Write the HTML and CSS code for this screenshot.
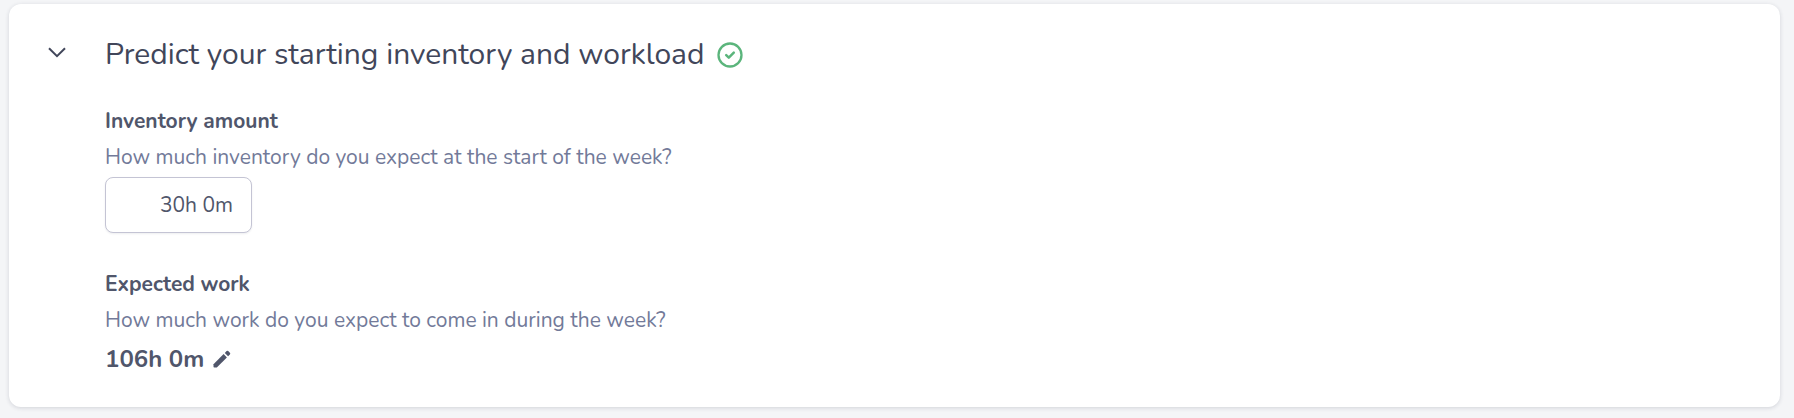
FILE: index.html
```html
<!DOCTYPE html>
<html lang="en">
<head>
  <meta charset="UTF-8">
  <meta name="viewport" content="width=device-width, initial-scale=1.0">
  <title>Weekly plan</title>
  <link rel="stylesheet" href="styles.css">
</head>
<body>
  <section class="card">
    <button type="button" class="toggle" aria-label="Collapse section" aria-expanded="true">
      <svg width="18" height="11" viewBox="0 0 18 11" fill="none" stroke="currentColor" stroke-width="2">
        <path d="M1 1.2L9 9.2L17 1.2"/>
      </svg>
    </button>
    <form class="content">
      <div class="heading">
        <h2>Predict your starting inventory and workload</h2>
        <svg class="check" width="26" height="26" viewBox="0 0 26 26" fill="none" stroke="currentColor">
          <circle cx="13" cy="13" r="11.5" stroke-width="2.3"/>
          <path d="M9.2 13.2L11.8 15.7L16.8 10.7" stroke-width="2.5" stroke-linecap="round" stroke-linejoin="round"/>
        </svg>
      </div>
      <div class="form-group">
        <label for="inventory">Inventory amount</label>
        <p>How much inventory do you expect at the start of the week?</p>
        <input type="text" id="inventory" name="inventory" value="30h 0m">
      </div>
      <div class="form-group">
        <h3>Expected work</h3>
        <p>How much work do you expect to come in during the week?</p>
        <div class="amount">
          <span>106h 0m</span>
          <button type="button" class="edit" aria-label="Edit expected work">
            <svg width="18" height="18" viewBox="0 0 18 18" fill="currentColor">
              <path d="M0.5 14.2L10.6 4.1L13.9 7.4L3.8 17.5H1.3Q0.5 17.5 0.5 16.7Z"/>
              <path d="M11.8 2.9L13.6 1.1Q14.4 0.3 15.2 1.1L16.9 2.8Q17.7 3.6 16.9 4.4L15.1 6.2Z"/>
            </svg>
          </button>
        </div>
      </div>
    </form>
  </section>
</body>
</html>
```

FILE: styles.css
```css
body {
  margin: 0;
  padding: 4px 14px 8px 9px;
  font-family: Nunito, Lato, sans-serif;
  font-size: 21px;
  line-height: 36px;
  color: #50566b;
  background-color: #f4f5f7;
}
.card {
  display: flex;
  align-items: flex-start;
  gap: 38px;
  padding: 32px 38px 30px;
  background: #fff;
  border-radius: 12px;
  box-shadow: 0 1px 4px rgba(30, 35, 60, 0.16);
}
button {
  display: flex;
  padding: 0;
  border: none;
  background: none;
  color: inherit;
  cursor: pointer;
}
.toggle {
  padding: 11px 1px;
  color: #41465a;
}
.content {
  flex: 1;
}
.heading {
  display: flex;
  align-items: center;
  gap: 12px;
  margin-bottom: 29px;
}
.heading h2 {
  margin: 0;
  font-size: 30px;
  font-weight: 400;
  line-height: 38px;
  color: #41465a;
}
.check {
  color: #5bb57c;
}
.form-group label,
.form-group h3 {
  display: block;
  margin: 0;
  font-size: 21px;
  font-weight: 700;
}
.form-group p {
  margin: 0;
  color: #727a99;
}
.form-group input {
  display: block;
  width: 147px;
  height: 56px;
  margin: 2px 0 33px;
  padding: 0 18px;
  border: 1px solid #c4c4d4;
  border-radius: 8px;
  box-sizing: border-box;
  box-shadow: 0 1px 2px rgba(30, 35, 60, 0.08);
  font: inherit;
  color: inherit;
  text-align: right;
}
.amount {
  display: flex;
  align-items: center;
  gap: 9px;
  margin-top: 3px;
  font-size: 24px;
  font-weight: 700;
}
```
